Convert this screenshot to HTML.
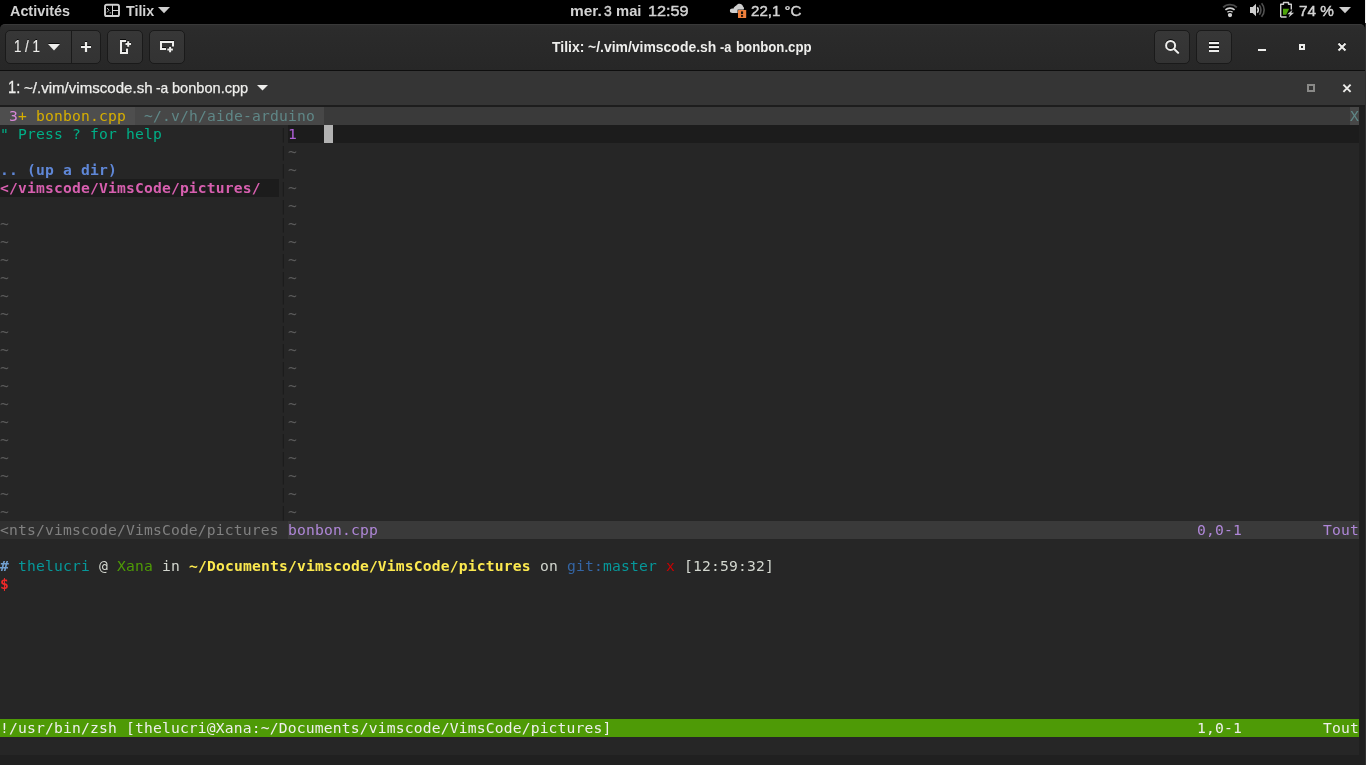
<!DOCTYPE html>
<html lang="fr">
<head>
<meta charset="utf-8">
<title>Tilix: ~/.vim/vimscode.sh -a bonbon.cpp</title>
<style>
*{box-sizing:border-box;margin:0;padding:0}
html,body{width:1366px;height:765px;overflow:hidden;background:#000}
body{position:relative;font-family:"Liberation Sans","DejaVu Sans",sans-serif;color:#eeeeec}
.abs{position:absolute}
/* ---------- GNOME top bar ---------- */
#under{position:absolute;left:0;top:60px;width:1365px;height:705px;background:#202020}
#top{position:absolute;left:0;top:0;width:1366px;height:24px;background:#000;color:#d2d2d2;font-weight:normal;-webkit-text-stroke:0.45px #d2d2d2;font-size:15px;line-height:24px}
#top .b{font-weight:bold;-webkit-text-stroke:0}
#top .t{position:absolute;top:-1px;white-space:pre;display:inline-block;transform-origin:0 50%}
/* ---------- header bar ---------- */
#hdr{position:absolute;left:0;top:24px;width:1365px;height:47px;background:linear-gradient(#2d2d2d,#2b2b2b 4px,#272727);border-top:1px solid #383838;border-bottom:1px solid #0e0e0e;border-radius:5px 5px 0 0;font-size:15px;color:#eeeeec}
.btn{position:absolute;top:5px;height:34px;border:1px solid #1a1a1a;border-radius:5px;background:linear-gradient(#373737,#333)}
#hx1{text-shadow:0 -1px rgba(0,0,0,.8);-webkit-text-stroke:0.2px #eeeeec}
#trow .h{-webkit-text-stroke:0.25px #eeeeec}
#hdr svg{filter:drop-shadow(0 -1px 0 rgba(0,0,0,.75))}
.tt{font-weight:bold}
.h{position:absolute;white-space:pre;line-height:20px;display:inline-block;transform-origin:0 50%}
/* ---------- session title row ---------- */
#trow{position:absolute;left:0;top:71px;width:1365px;height:34px;background:#353535;font-size:15px;color:#eeeeec}
#sep{position:absolute;left:0;top:105px;width:1365px;height:2px;background:#1d1d1d}
/* ---------- terminal ---------- */
#top,#hdr,#trow,#term{will-change:transform}
#term{position:absolute;left:0;top:107px;width:1359px;height:648px;background:#262626;font-family:"DejaVu Sans Mono","Liberation Mono",monospace;font-size:14.667px;letter-spacing:0.17px;color:#d3d7cf;overflow:hidden}
#edge{position:absolute;left:1365px;top:23px;width:1px;height:742px;background:#313131}
.r{position:absolute;left:0;width:1359px;height:18px;line-height:18px;white-space:pre}
.r span{position:absolute;top:0;height:18px;white-space:pre;overflow:visible}
.t1{background:#4e4e4e}.t2{background:#474747;color:#5f8787}.tf{background:#3a3a3a}.tx{background:#474747;color:#5f8787}
.pk{color:#d787d7}.gd{color:#d7af00}
.hl{color:#00af87}.vs{color:#1c1c1c}.nt{color:#5a5a5a}
.ln{color:#af5fd7}.cl{background:#1c1c1c}.cur{background:#b2b2b2}
.up{color:#5f87d7;font-weight:bold}.cw{color:#d75faf;font-weight:bold}
.s1{background:#303030;color:#808080}.s2{background:#3a3a3a;color:#af87d7}
.sg{background:#4e9a06;color:#eeeeec}
.pb{color:#729fcf;font-weight:bold}.pc{color:#06989a}.pw{color:#d3d7cf}.pg{color:#4e9a06}
.py{color:#fce94f;font-weight:bold}.pbl{color:#3465a4}.pr{color:#cc0000}.pd{color:#ef2929;font-weight:bold}
</style>
</head>
<body>
<div id="under"></div>
<div id="top">
  <span class="t b" id="tx1" style="left:10.3px;transform:scaleX(0.958)">Activités</span>
  <svg class="abs" style="left:103px;top:3px" width="18" height="15" viewBox="0 0 18 15"><rect x="2" y="1.8" width="14" height="11.2" rx="1.6" fill="none" stroke="#cfcfcf" stroke-width="1.9"/><path d="M9.5 2v11M10 7.5h6" stroke="#cfcfcf" stroke-width="1" fill="none"/><path d="M4 5l2.2 2.2L4 9.4M6.6 9.9h1.6" stroke="#cfcfcf" stroke-width="0.9" fill="none"/></svg>
  <span class="t b" id="tx2" style="left:126.0px;transform:scaleX(0.95)">Tilix</span>
  <svg class="abs" style="left:158px;top:7px" width="12" height="7" viewBox="0 0 12 7"><path d="M0 0h12L6 6.3z" fill="#cfcfcf"/></svg>
  <span class="t b" id="tx3" style="left:569.9px;transform:scaleX(1.03)">mer.</span>
  <span class="t" id="tx7" style="left:604.3px;transform:scaleX(0.93)">3</span>
  <span class="t b" id="tx8" style="left:616.2px;transform:scaleX(0.985)">mai</span>
  <span class="t" id="tx4" style="left:647.9px;transform:scaleX(1.082)">12:59</span>
  <svg class="abs" style="left:729px;top:3px" width="19" height="16" viewBox="0 0 19 16"><path d="M3.4 10C1.9 10 0.9 9 0.9 7.7 0.9 6.4 1.9 5.5 3.2 5.5c0.4 0 0.8 0.1 1.1 0.3C5 4 6.2 3.2 7.3 2.6 8 1.4 9.3 0.8 10.5 0.8c1.7 0 3 1 3.5 2.6 0.6 0.4 1 1 1 1.8 0 0.4-0.1 0.8-0.3 1.1V10z" fill="#cfcfcf"/><rect x="8.6" y="6.6" width="9" height="8.8" fill="#000"/><rect x="9" y="7" width="8.2" height="8" rx="0.6" fill="#ef7f3c"/><rect x="12" y="8.4" width="2.1" height="2.7" fill="#1a1008"/><rect x="12" y="12.1" width="2.1" height="1.7" fill="#1a1008"/></svg>
  <span class="t" id="tx5" style="left:751.2px;transform:scaleX(1.006)">22,1 °C</span>
  <!-- wifi -->
  <svg class="abs" style="left:1221px;top:2px" width="18" height="17" viewBox="0 0 18 17"><path d="M2.2 5.3C5.8 1.7 12.2 1.7 15.8 5.3" fill="none" stroke="#4c4c4c" stroke-width="1.9"/><path d="M4.4 7.9C6.9 5.5 11.1 5.5 13.6 7.9" fill="none" stroke="#cfcfcf" stroke-width="1.6"/><path d="M6.4 10.3C7.8 9 10.2 9 11.6 10.3" fill="none" stroke="#cfcfcf" stroke-width="1.4"/><circle cx="9" cy="13.1" r="2.15" fill="#cfcfcf"/></svg>
  <!-- speaker -->
  <svg class="abs" style="left:1249px;top:2px" width="18" height="17" viewBox="0 0 18 17"><path d="M1 5h2.6L7 1.7v12.6L3.6 11H1z" fill="#cfcfcf"/><path d="M8.3 5.2c1.2 1.6 1.2 4 0 5.6" fill="none" stroke="#cfcfcf" stroke-width="1.5"/><path d="M10.3 3.2c2.2 2.6 2.2 7 0 9.6" fill="none" stroke="#505050" stroke-width="1.6"/><path d="M12.6 1.2c3.4 4 3.4 9.6 0 13.6" fill="none" stroke="#505050" stroke-width="1.6"/></svg>
  <!-- battery -->
  <svg class="abs" style="left:1279px;top:1px" width="17" height="18" viewBox="0 0 17 18"><path d="M1.7 16V3.2H4.5V1.5H9.5V3.2H12.3V8.4M1.7 16H7.6" fill="none" stroke="#cfcfcf" stroke-width="1.4" stroke-linejoin="round"/><path d="M4 7.8h6.2L7.2 13.7H4z" fill="#4da30b"/><path d="M13.5 8.7L8.3 13.2H11L9.5 16.6L15.1 11.8H12.3z" fill="#cfcfcf"/></svg>
  <span class="t" id="tx6" style="left:1299.3px;transform:scaleX(1.02)">74 %</span>
  <svg class="abs" style="left:1339px;top:7px" width="12" height="7" viewBox="0 0 12 7"><path d="M0 0h12L6 6.3z" fill="#cfcfcf"/></svg>
  <div class="abs" style="left:1365px;top:0;width:1px;height:23px;background:#e8e8e8"></div>
</div>
<div id="hdr">
  <div class="btn" style="left:5px;width:67px;border-radius:5px 0 0 5px"></div>
  <div class="btn" style="left:71px;width:30px;border-radius:0 5px 5px 0"></div>
  <div class="btn" style="left:107px;width:36px"></div>
  <div class="btn" style="left:149px;width:36px"></div>
  <div class="btn" style="left:1154px;width:36px"></div>
  <div class="btn" style="left:1196px;width:36px"></div>
  <span class="h" id="hx1" style="left:14.1px;top:12px;transform-origin:0 76%;transform:scale(0.885,1.05)">1 / 1</span>
  <svg class="abs" style="left:48px;top:19px" width="12" height="7" viewBox="0 0 12 7"><path d="M0 0h12L6 6.5z" fill="#eeeeec"/></svg>
  <!-- plus -->
  <svg class="abs" style="left:80px;top:16px" width="12" height="12" viewBox="0 0 12 12"><path d="M1 6h10M6 1v10" stroke="#eeeeec" stroke-width="2.2"/></svg>
  <!-- add right -->
  <svg class="abs" style="left:118px;top:14px" width="16" height="18" viewBox="0 0 16 18"><path d="M8 2H3v12h6V9.5" fill="none" stroke="#eeeeec" stroke-width="2"/><path d="M7.5 5h5.5M10.2 2.2v5.6" stroke="#eeeeec" stroke-width="2"/></svg>
  <!-- add down -->
  <svg class="abs" style="left:158px;top:15px" width="18" height="16" viewBox="0 0 18 16"><path d="M8 9H3V2h12v4.5" fill="none" stroke="#eeeeec" stroke-width="2"/><path d="M9.3 9.5h5.6M12.1 6.7v5.6" stroke="#eeeeec" stroke-width="2"/></svg>
  <!-- search -->
  <svg class="abs" style="left:1162px;top:12px" width="20" height="20" viewBox="0 0 20 20"><circle cx="8.6" cy="8.4" r="4.5" fill="none" stroke="#eeeeec" stroke-width="2"/><path d="M12 11.8l4.1 3.9" stroke="#eeeeec" stroke-width="2.2" stroke-linecap="round"/></svg>
  <!-- menu -->
  <svg class="abs" style="left:1208px;top:16px" width="12" height="13" viewBox="0 0 12 13"><path d="M1 2h10M1 6h10M1 10h10" stroke="#eeeeec" stroke-width="2"/></svg>
  <!-- min -->
  <div class="abs" style="left:1258px;top:24px;width:8px;height:2px;background:#eeeeec"></div>
  <!-- max -->
  <div class="abs" style="left:1299px;top:19px;width:6px;height:6px;border:2px solid #eeeeec"></div>
  <!-- close -->
  <svg class="abs" style="left:1337px;top:17px" width="10" height="10" viewBox="0 0 10 10"><path d="M1.5 1.5l7 7M8.5 1.5l-7 7" stroke="#eeeeec" stroke-width="2.1"/></svg>
  <span class="h tt" id="t1" style="left:552.3px;top:12px;transform-origin:0 76%;transform:scale(0.93,1)">Tilix:</span>
  <span class="h tt" id="t2" style="left:588.3px;top:12px;transform-origin:0 76%;transform:scale(0.93,1)">~/.vim/vimscode.sh</span>
  <span class="h tt" id="t3" style="left:720.3px;top:12px;transform-origin:0 76%;transform:scale(0.85,1)">-a</span>
  <span class="h tt" id="t4" style="left:736.4px;top:12px;transform-origin:0 76%;transform:scale(0.88,1)">bonbon.cpp</span>
</div>
<div id="trow">
  <span class="h" id="l1" style="left:8.3px;top:7px;transform-origin:0 76%;transform:scale(0.98,1.05)">1:</span>
  <span class="h" id="l2" style="left:23.8px;top:7px;transform-origin:0 76%;transform:scale(1.005,1)">~/.vim/vimscode.sh</span>
  <span class="h" id="l3" style="left:156.2px;top:7px;transform-origin:0 76%;transform:scale(0.92,1)">-a</span>
  <span class="h" id="l4" style="left:172.3px;top:7px;transform-origin:0 76%;transform:scale(0.972,1)">bonbon.cpp</span>
  <svg class="abs" style="left:257px;top:14px" width="11" height="6" viewBox="0 0 11 6"><path d="M0 0h11L5.5 5.5z" fill="#eeeeec"/></svg>
  <div class="abs" style="left:1307px;top:13px;width:8px;height:8px;border:2px solid #8a8a88"></div>
  <svg class="abs" style="left:1342px;top:12px" width="10" height="10" viewBox="0 0 10 10"><path d="M1.4 1.6l7.2 7.2M8.6 1.6l-7.2 7.2" stroke="#eeeeec" stroke-width="1.9"/></svg>
</div>
<div id="sep"></div>
<div id="edge"></div>
<div id="term">
<div class="r" style="top:0px"><span class="t1" style="left:0px;width:9px"> </span><span class="t1 pk" style="left:9px;width:9px">3</span><span class="t1 gd" style="left:18px;width:117px">+ bonbon.cpp </span><span class="t2" style="left:135px;width:189px"> ~/.v/h/aide-arduino </span><span class="tf" style="left:324px;width:1026px">                                                                                                                  </span><span class="tx" style="left:1350px;width:9px">X</span></div>
<div class="r" style="top:18px"><span class="hl" style="left:0px;width:162px">&quot; Press ? for help</span><span class="vs" style="left:279px;width:9px">|</span><span class="ln cl" style="left:288px;width:27px">1  </span><span class="cl" style="left:315px;width:9px"> </span><span class="cur" style="left:324px;width:9px"> </span><span class="cl" style="left:333px;width:1026px">                                                                                                                  </span></div>
<div class="r" style="top:36px"><span class="vs" style="left:279px;width:9px">|</span><span class="nt" style="left:288px;width:9px">~</span></div>
<div class="r" style="top:54px"><span class="up" style="left:0px;width:117px">.. (up a dir)</span><span class="vs" style="left:279px;width:9px">|</span><span class="nt" style="left:288px;width:9px">~</span></div>
<div class="r" style="top:72px"><span class="cw cl" style="left:0px;width:261px">&lt;/vimscode/VimsCode/pictures/</span><span class="cl" style="left:261px;width:18px">  </span><span class="vs" style="left:279px;width:9px">|</span><span class="nt" style="left:288px;width:9px">~</span></div>
<div class="r" style="top:90px"><span class="vs" style="left:279px;width:9px">|</span><span class="nt" style="left:288px;width:9px">~</span></div>
<div class="r" style="top:108px"><span class="nt" style="left:0px;width:9px">~</span><span class="vs" style="left:279px;width:9px">|</span><span class="nt" style="left:288px;width:9px">~</span></div>
<div class="r" style="top:126px"><span class="nt" style="left:0px;width:9px">~</span><span class="vs" style="left:279px;width:9px">|</span><span class="nt" style="left:288px;width:9px">~</span></div>
<div class="r" style="top:144px"><span class="nt" style="left:0px;width:9px">~</span><span class="vs" style="left:279px;width:9px">|</span><span class="nt" style="left:288px;width:9px">~</span></div>
<div class="r" style="top:162px"><span class="nt" style="left:0px;width:9px">~</span><span class="vs" style="left:279px;width:9px">|</span><span class="nt" style="left:288px;width:9px">~</span></div>
<div class="r" style="top:180px"><span class="nt" style="left:0px;width:9px">~</span><span class="vs" style="left:279px;width:9px">|</span><span class="nt" style="left:288px;width:9px">~</span></div>
<div class="r" style="top:198px"><span class="nt" style="left:0px;width:9px">~</span><span class="vs" style="left:279px;width:9px">|</span><span class="nt" style="left:288px;width:9px">~</span></div>
<div class="r" style="top:216px"><span class="nt" style="left:0px;width:9px">~</span><span class="vs" style="left:279px;width:9px">|</span><span class="nt" style="left:288px;width:9px">~</span></div>
<div class="r" style="top:234px"><span class="nt" style="left:0px;width:9px">~</span><span class="vs" style="left:279px;width:9px">|</span><span class="nt" style="left:288px;width:9px">~</span></div>
<div class="r" style="top:252px"><span class="nt" style="left:0px;width:9px">~</span><span class="vs" style="left:279px;width:9px">|</span><span class="nt" style="left:288px;width:9px">~</span></div>
<div class="r" style="top:270px"><span class="nt" style="left:0px;width:9px">~</span><span class="vs" style="left:279px;width:9px">|</span><span class="nt" style="left:288px;width:9px">~</span></div>
<div class="r" style="top:288px"><span class="nt" style="left:0px;width:9px">~</span><span class="vs" style="left:279px;width:9px">|</span><span class="nt" style="left:288px;width:9px">~</span></div>
<div class="r" style="top:306px"><span class="nt" style="left:0px;width:9px">~</span><span class="vs" style="left:279px;width:9px">|</span><span class="nt" style="left:288px;width:9px">~</span></div>
<div class="r" style="top:324px"><span class="nt" style="left:0px;width:9px">~</span><span class="vs" style="left:279px;width:9px">|</span><span class="nt" style="left:288px;width:9px">~</span></div>
<div class="r" style="top:342px"><span class="nt" style="left:0px;width:9px">~</span><span class="vs" style="left:279px;width:9px">|</span><span class="nt" style="left:288px;width:9px">~</span></div>
<div class="r" style="top:360px"><span class="nt" style="left:0px;width:9px">~</span><span class="vs" style="left:279px;width:9px">|</span><span class="nt" style="left:288px;width:9px">~</span></div>
<div class="r" style="top:378px"><span class="nt" style="left:0px;width:9px">~</span><span class="vs" style="left:279px;width:9px">|</span><span class="nt" style="left:288px;width:9px">~</span></div>
<div class="r" style="top:396px"><span class="nt" style="left:0px;width:9px">~</span><span class="vs" style="left:279px;width:9px">|</span><span class="nt" style="left:288px;width:9px">~</span></div>
<div class="r" style="top:414px"><span class="s1" style="left:0px;width:279px">&lt;nts/vimscode/VimsCode/pictures</span><span class="s1" style="left:279px;width:9px"> </span><span class="s2" style="left:288px;width:90px">bonbon.cpp</span><span class="s2" style="left:378px;width:819px">                                                                                           </span><span class="s2" style="left:1197px;width:45px">0,0-1</span><span class="s2" style="left:1242px;width:81px">         </span><span class="s2" style="left:1323px;width:36px">Tout</span></div>
<div class="r" style="top:450px"><span class="pb" style="left:0px;width:9px">#</span><span class="pc" style="left:18px;width:72px">thelucri</span><span class="pw" style="left:99px;width:9px">@</span><span class="pg" style="left:117px;width:36px">Xana</span><span class="pw" style="left:162px;width:18px">in</span><span class="py" style="left:189px;width:342px">~/Documents/vimscode/VimsCode/pictures</span><span class="pw" style="left:540px;width:18px">on</span><span class="pbl" style="left:567px;width:36px">git:</span><span class="pc" style="left:603px;width:54px">master</span><span class="pr" style="left:666px;width:9px">x</span><span class="pw" style="left:684px;width:90px">[12:59:32]</span></div>
<div class="r" style="top:468px"><span class="pd" style="left:0px;width:9px">$</span></div>
<div class="r" style="top:612px"><span class="sg" style="left:0px;width:612px">!/usr/bin/zsh [thelucri@Xana:~/Documents/vimscode/VimsCode/pictures]</span><span class="sg" style="left:612px;width:585px">                                                                 </span><span class="sg" style="left:1197px;width:45px">1,0-1</span><span class="sg" style="left:1242px;width:81px">         </span><span class="sg" style="left:1323px;width:36px">Tout</span></div></div></body></html>
